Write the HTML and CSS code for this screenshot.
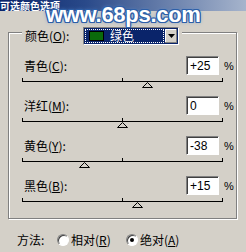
FILE: index.html
```html
<!DOCTYPE html>
<html>
<head>
<meta charset="utf-8">
<link rel="stylesheet" href="styles.css">
</head>
<body>
<div class="window">
  <div class="titlebar"><span class="title">可选颜色选项</span></div>
  <div class="group">
    <div class="legend">
      <span class="lbl">颜色(<u>O</u>):</span>
      <div class="select">
        <div class="sel-value"><span class="swatch"></span><span class="sel-text">绿色</span></div>
        <div class="sel-btn"><svg width="7" height="4" viewBox="0 0 7 4"><path d="M0 0h7L3.5 4z" fill="#000"/></svg></div>
      </div>
    </div>
    <div class="rows">
      <div class="row">
        <div class="row-top"><span class="lbl">青色(<u>C</u>):</span><span class="input">+25</span><span class="pct">%</span></div>
        <div class="track"><svg class="thumb" style="left:120px" width="11" height="6" viewBox="0 0 11 6"><path d="M5.5 0.5L10.5 5.5H0.5Z" fill="#d4d0c8" stroke="#000" stroke-width="1"/></svg></div>
      </div>
      <div class="row">
        <div class="row-top"><span class="lbl">洋红(<u>M</u>):</span><span class="input">0</span><span class="pct">%</span></div>
        <div class="track"><svg class="thumb" style="left:95px" width="11" height="6" viewBox="0 0 11 6"><path d="M5.5 0.5L10.5 5.5H0.5Z" fill="#d4d0c8" stroke="#000" stroke-width="1"/></svg></div>
      </div>
      <div class="row">
        <div class="row-top"><span class="lbl">黄色(<u>Y</u>):</span><span class="input">-38</span><span class="pct">%</span></div>
        <div class="track"><svg class="thumb" style="left:57px" width="11" height="6" viewBox="0 0 11 6"><path d="M5.5 0.5L10.5 5.5H0.5Z" fill="#d4d0c8" stroke="#000" stroke-width="1"/></svg></div>
      </div>
      <div class="row">
        <div class="row-top"><span class="lbl">黑色(<u>B</u>):</span><span class="input">+15</span><span class="pct">%</span></div>
        <div class="track"><svg class="thumb" style="left:110px" width="11" height="6" viewBox="0 0 11 6"><path d="M5.5 0.5L10.5 5.5H0.5Z" fill="#d4d0c8" stroke="#000" stroke-width="1"/></svg></div>
      </div>
    </div>
  </div>
  <div class="method">
    <span class="mlabel">方法:</span>
    <span class="radio"></span><span class="rtext">相对(<u>R</u>)</span>
    <span class="radio checked"></span><span class="rtext">绝对(<u>A</u>)</span>
  </div>
  <div class="watermark">www.68ps.com</div>
</div>
</body>
</html>
```
FILE: styles.css
```css
html, body {
  margin: 0;
  padding: 0;
  background: #d4d0c8;
  width: 246px;
  height: 252px;
  overflow: hidden;
}
.window {
  position: relative;
  width: 246px;
  height: 252px;
  font-family: "Noto Sans CJK SC", "Liberation Sans", sans-serif;
  font-size: 12px;
  color: #000;
}
.titlebar {
  height: 11px;
  overflow: hidden;
  background: linear-gradient(to right, #0a246a 0%, #2a4a8a 35%, #a6b4cc 100%);
}
.title {
  display: block;
  margin: 0;
  font-size: 10px;
  line-height: 11px;
  font-weight: bold;
  color: #fff;
}
.group {
  box-sizing: border-box;
  margin: 21px 0 0 8px;
  width: 229px;
  height: 187px;
  border: 1px solid #808080;
  box-shadow: inset 1px 1px #fff, 1px 1px #fff;
}
.legend {
  display: flex;
  align-items: center;
  width: fit-content;
  height: 18px;
  margin: -6px 0 0 13px;
  padding: 0 3px;
  background: #d4d0c8;
}
.lbl {
  line-height: 14px;
  white-space: nowrap;
}
.legend .lbl {
  width: 58px;
}
.select {
  box-sizing: border-box;
  display: flex;
  width: 96px;
  height: 18px;
  border: 1px solid;
  border-color: #808080 #fff #fff #808080;
  background: #0a246a;
}
.sel-value {
  flex: 1;
  display: flex;
  align-items: center;
  margin: 1px;
  outline: 1px dotted #fff;
  outline-offset: -1px;
  background: #0a246a;
}
.swatch {
  width: 15px;
  height: 10px;
  margin-left: 4px;
  background: #0b6a0b;
  border: 1px solid #000;
  box-sizing: border-box;
}
.sel-text {
  margin-left: 6px;
  color: #fff;
  line-height: 14px;
}
.sel-btn {
  width: 12px;
  margin: 1px 1px 1px 0;
  display: flex;
  align-items: center;
  justify-content: center;
  background: #d4d0c8;
  box-shadow: inset -1px -1px #808080, inset 1px 1px #fff;
}
.rows {
  margin-top: 11px;
  padding-left: 13px;
}
.row {
  height: 40px;
}
.row-top {
  display: grid;
  grid-template-columns: 164px 33px auto;
  align-items: center;
  height: 19px;
}
.row-top .lbl {
  padding-left: 2px;
}
.input {
  box-sizing: border-box;
  height: 19px;
  padding: 2px 0 0 3px;
  font-family: "Liberation Sans", "Noto Sans", sans-serif;
  font-size: 12px;
  line-height: 14px;
  background: #fff;
  border: 1px solid;
  border-color: #808080 #fff #fff #808080;
  box-shadow: inset 1px 1px #404040;
}
.pct {
  margin-left: 5px;
  font-family: "Liberation Sans", sans-serif;
  font-size: 11px;
  line-height: 12px;
}
.track {
  position: relative;
  width: 201px;
  height: 4px;
  margin-top: 3px;
  background:
    linear-gradient(#000, #000) 0 3px / 100% 1px no-repeat,
    linear-gradient(#000, #000) 0 0 / 1px 4px no-repeat,
    linear-gradient(#000, #000) 100px 0 / 1px 4px no-repeat,
    linear-gradient(#000, #000) 200px 0 / 1px 4px no-repeat;
}
.thumb {
  position: absolute;
  top: 4px;
  display: block;
}
.method {
  display: flex;
  align-items: center;
  height: 14px;
  margin-top: 14px;
  padding-left: 17px;
}
.mlabel {
  width: 40px;
  line-height: 14px;
}
.radio {
  box-sizing: border-box;
  width: 12px;
  height: 12px;
  border-radius: 50%;
  border: 1px solid;
  border-color: #808080 #fff #fff #808080;
  background: #fff;
  box-shadow: inset 1px 1px #404040;
  display: flex;
  align-items: center;
  justify-content: center;
}
.radio.checked::after {
  content: "";
  width: 4px;
  height: 4px;
  border-radius: 50%;
  background: #000;
}
.rtext {
  margin-left: 2px;
  width: 55px;
  line-height: 14px;
  white-space: nowrap;
}
.watermark {
  position: absolute;
  left: 46px;
  top: 4px;
  font-family: "Liberation Sans", sans-serif;
  font-weight: bold;
  font-size: 22px;
  line-height: 21px;
  color: #fff;
  letter-spacing: -0.3px;
  text-shadow:
    1px 0 #2d5fa8, -1px 0 #2d5fa8, 0 1px #2d5fa8, 0 -1px #2d5fa8,
    1px 1px #2d5fa8, -1px -1px #2d5fa8, 1px -1px #2d5fa8, -1px 1px #2d5fa8,
    0 0 4px #5a8ccc;
}
```
